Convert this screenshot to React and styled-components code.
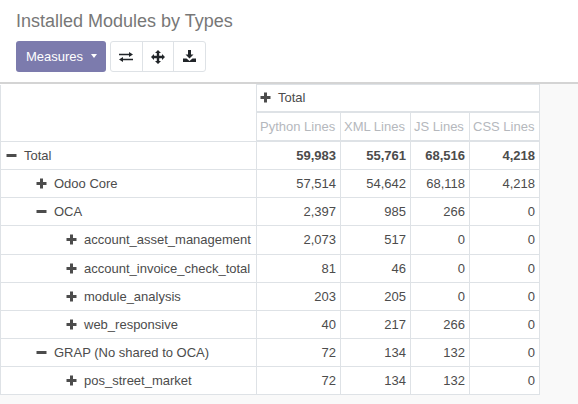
import React from 'react';
import styled, { createGlobalStyle } from 'styled-components';

const GlobalStyle = createGlobalStyle`
  html, body {
    margin: 0;
    background-color: #f9f9f9;
    font-family: "Liberation Sans", Arial, sans-serif;
    font-size: 13px;
    line-height: 19.1px;
    color: #4c4c4c;
  }
`;

const ControlPanel = styled.header`
  box-sizing: border-box;
  height: 84px;
  padding: 9px 16px 0;
  background-color: #ffffff;
  border-bottom: 2px solid #d4d4d4;
`;

const Title = styled.h1`
  margin: 0;
  font-size: 18px;
  font-weight: 400;
  line-height: 24px;
  color: #777777;
`;

const Toolbar = styled.div`
  display: flex;
  gap: 4px;
  margin-top: 8px;
`;

const MeasuresButton = styled.button`
  display: flex;
  align-items: center;
  gap: 8px;
  width: 90px;
  height: 31px;
  padding: 1px 10px 0;
  border: 0;
  border-radius: 3px;
  background-color: #7c7bad;
  color: #ffffff;
  font: inherit;
`;

const Caret = styled.span`
  width: 0;
  height: 0;
  border-left: 3.5px solid transparent;
  border-right: 3.5px solid transparent;
  border-top: 4px solid #ffffff;
  margin-top: -3px;
`;

const ButtonGroup = styled.div`
  display: flex;
  box-sizing: border-box;
  width: 96px;
  height: 31px;
  border: 1px solid #dee2e6;
  border-radius: 3px;
  background-color: #ffffff;
`;

const IconButton = styled.button`
  flex: 1;
  display: flex;
  align-items: center;
  justify-content: center;
  padding: 0;
  border: 0;
  background: none;
  color: #212529;

  & + & {
    border-left: 1px solid #dee2e6;
  }
`;

const Table = styled.table`
  border-collapse: collapse;
  background-color: #ffffff;
  table-layout: fixed;
  width: 539px;
`;

const HeaderCell = styled.th`
  border: 1px solid #dee2e6;
  border-bottom-width: 2px;
  padding: ${(p) => (p.$top ? '3px 3px 4px' : '4px 3px')};
  font-weight: 400;
  text-align: left;
  white-space: nowrap;
`;

const MeasureCell = styled(HeaderCell)`
  color: #b5b8bd;
`;

const RowHead = styled.td`
  border: 1px solid #dee2e6;
  padding: 4px 0 4px ${(p) => 5 + p.$depth * 30}px;
  white-space: nowrap;
`;

const TopCorner = styled.td`
  border-left: 1px solid #dee2e6;
  border-right: 1px solid #dee2e6;
`;

const ValueCell = styled.td`
  border: 1px solid #dee2e6;
  padding: 4px;
  text-align: right;
  font-weight: ${(p) => (p.$bold ? 700 : 400)};
`;

const Toggle = styled.svg`
  width: 11px;
  height: 11px;
  margin-right: 7px;
  vertical-align: -1px;
  fill: #4c4c4c;
`;

const PlusIcon = () => (
  <Toggle viewBox="0 0 11 11">
    <path d="M4 .5h3V4h3.500v3H7v3.500H4V7H.5V4H4z" />
  </Toggle>
);

const MinusIcon = () => (
  <Toggle viewBox="0 0 11 11">
    <path d="M.5 4h10v3H.5z" />
  </Toggle>
);

const ExchangeIcon = () => (
  <svg width="14" height="10" viewBox="0 0 14 10" fill="currentColor">
    <path d="M0 1.800h10V0l4 2.500L10 5V3.200H0zM14 6.800H4V5L0 7.500 4 10V8.200h10z" />
  </svg>
);

const MoveIcon = () => (
  <svg width="14" height="14" viewBox="0 0 14 14" fill="currentColor">
    <path d="M7 0l3 3H8.200v2.800H11V4l3 3-3 3V8.200H8.200V11H10l-3 3-3-3h1.800V8.200H3V10L0 7l3-3v1.800h2.800V3H4z" />
  </svg>
);

const DownloadIcon = () => (
  <svg width="13" height="13" viewBox="0 0 13 13" fill="currentColor">
    <path d="M5 0h3v4.500h2.500L6.500 8.500l-4-4H5zM0 8.500h3.500l3 2.500 3-2.500H13V12H0z" />
  </svg>
);

const rows = [
  { label: 'Total', depth: 0, open: true, bold: true, values: ['59,983', '55,761', '68,516', '4,218'] },
  { label: 'Odoo Core', depth: 1, values: ['57,514', '54,642', '68,118', '4,218'] },
  { label: 'OCA', depth: 1, open: true, values: ['2,397', '985', '266', '0'] },
  { label: 'account_asset_management', depth: 2, values: ['2,073', '517', '0', '0'] },
  { label: 'account_invoice_check_total', depth: 2, values: ['81', '46', '0', '0'] },
  { label: 'module_analysis', depth: 2, values: ['203', '205', '0', '0'] },
  { label: 'web_responsive', depth: 2, values: ['40', '217', '266', '0'] },
  { label: 'GRAP (No shared to OCA)', depth: 1, open: true, values: ['72', '134', '132', '0'] },
  { label: 'pos_street_market', depth: 2, values: ['72', '134', '132', '0'] },
];

const measures = ['Python Lines', 'XML Lines', 'JS Lines', 'CSS Lines'];

export default function App() {
  return (
    <>
      <GlobalStyle />
      <ControlPanel>
        <Title>Installed Modules by Types</Title>
        <Toolbar>
          <MeasuresButton>
            Measures <Caret />
          </MeasuresButton>
          <ButtonGroup>
            <IconButton><ExchangeIcon /></IconButton>
            <IconButton><MoveIcon /></IconButton>
            <IconButton><DownloadIcon /></IconButton>
          </ButtonGroup>
        </Toolbar>
      </ControlPanel>
      <Table>
        <colgroup>
          <col width="256" />
          <col width="84" />
          <col width="70" />
          <col width="59" />
          <col width="70" />
        </colgroup>
        <thead>
          <tr>
            <TopCorner rowSpan={2} />
            <HeaderCell colSpan={4} $top>
              <PlusIcon />Total
            </HeaderCell>
          </tr>
          <tr>
            {measures.map((m) => (
              <MeasureCell key={m}>{m}</MeasureCell>
            ))}
          </tr>
        </thead>
        <tbody>
          {rows.map((r) => (
            <tr key={r.label}>
              <RowHead $depth={r.depth}>
                {r.open ? <MinusIcon /> : <PlusIcon />}
                {r.label}
              </RowHead>
              {r.values.map((v, i) => (
                <ValueCell key={i} $bold={r.bold}>{v}</ValueCell>
              ))}
            </tr>
          ))}
        </tbody>
      </Table>
    </>
  );
}
